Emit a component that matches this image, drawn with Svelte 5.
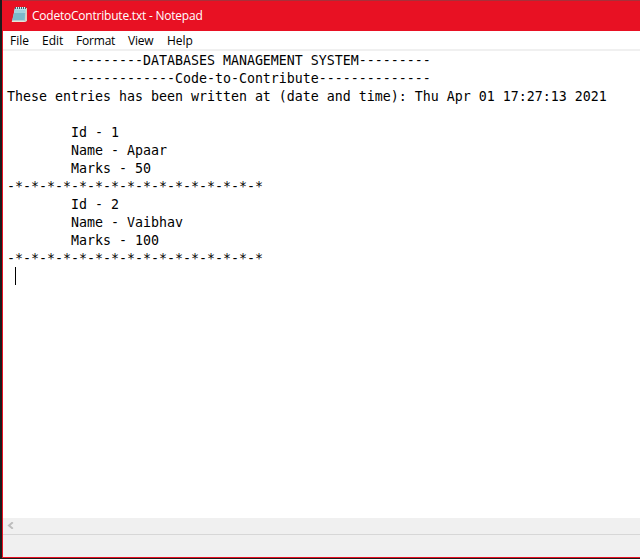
<script>
  const lines = [
    '\t---------DATABASES MANAGEMENT SYSTEM---------',
    '\t-------------Code-to-Contribute--------------',
    'These entries has been written at (date and time): Thu Apr 01 17:27:13 2021',
    '',
    '\tId - 1',
    '\tName - Apaar',
    '\tMarks - 50',
    '-*'.repeat(16),
    '\tId - 2',
    '\tName - Vaibhav',
    '\tMarks - 100',
    '-*'.repeat(16)
  ];
  const menus = ['File', 'Edit', 'Format', 'View', 'Help'];
</script>

<div class="desktop">
  <div class="window">
    <header>
      <svg width="17" height="17" viewBox="0 0 17 17">
        <path d="M4 2h12v13l-2 1H1z" fill="#c7d5d8" />
        <path d="M4 2h11l-1.3 13H1z" fill="#83bdce" />
        <path d="M4 2h11l-.5 5H3z" fill="#b4dfe9" />
        <path d="M1.5 14.5h12l-.2 1.5H.6z" fill="#e9e5d7" />
        <path d="M15 2h1v12l-2 2z" fill="#e0d0bd" />
        <path d="M4 5h10M3.6 7h10M3.2 9h10M2.8 11h10M2.4 13h10" stroke="#6ba8b8" stroke-width=".5" />
        <path d="M4.5 1v2M6.5 1v2M8.5 1v2M10.5 1v2M12.5 1v2M14.5 1v2" stroke="#48636b" />
        <path d="M5.5 1v1M7.5 1v1M9.5 1v1M11.5 1v1M13.5 1v1" stroke="#e8f2f2" />
      </svg>
      <span class="title">CodetoContribute.txt - Notepad</span>
    </header>
    <nav>
      {#each menus as m}<span class={m.toLowerCase()}>{m}</span>{/each}
    </nav>
    <main>
      {#each lines as line}<div class="line">{line}</div>{/each}
      <div class="caret"></div>
    </main>
    <div class="scroll">
      <svg width="7" height="7" viewBox="0 0 7 7"><path d="M5.8.3L2 3.5l3.8 3.2" fill="none" stroke="#bdbdbd" stroke-width="2" /></svg>
    </div>
    <footer></footer>
  </div>
</div>

<style>
  :global(body) { margin: 0; overflow: hidden; }
  .desktop {
    box-sizing: border-box;
    width: 640px;
    height: 559px;
    padding: 0 0 1px 2px;
    background: #1b1b1b;
    overflow: hidden;
  }
  .window {
    box-sizing: border-box;
    height: 558px;
    display: flex;
    flex-direction: column;
    border: solid #e81123;
    border-width: 0 0 1px 1px;
    background: #fff;
  }
  header {
    box-sizing: border-box;
    height: 31px;
    flex: none;
    display: flex;
    align-items: flex-start;
    padding: 5px 0 0 8px;
    gap: 4px;
    background: #e81123;
    border-top: 1px solid #a8303a;
  }
  .title {
    padding-top: 2px;
    font: 12px/16px 'Open Sans', sans-serif;
    color: #fff;
    white-space: nowrap;
    letter-spacing: -0.22px;
  }
  nav {
    box-sizing: border-box;
    height: 20px;
    flex: none;
    display: flex;
    padding-left: 7px;
    border-bottom: 2px solid #f0f0f0;
    font: 12px/20px 'Open Sans', sans-serif;
    color: #000;
  }
  .file { width: 32px; }
  .edit { width: 34px; }
  .format { width: 52px; letter-spacing: -0.2px; }
  .view { width: 39px; letter-spacing: -0.2px; }
  main {
    flex: 1;
    min-height: 0;
    padding: 1px 0 0 4px;
    font: 13.29px/18px 'DejaVu Sans Mono', monospace;
    color: #000;
  }
  .line {
    height: 18px;
    white-space: pre;
    tab-size: 8;
  }
  .caret {
    width: 1px;
    height: 18px;
    margin: -1px 0 0 8px;
    background: #000;
  }
  .scroll {
    height: 16px;
    flex: none;
    display: flex;
    align-items: center;
    padding-left: 4px;
    background: #f0f0f0;
  }
  .scroll svg { margin-top: -2px; }
  footer {
    height: 22px;
    flex: none;
    border-top: 1px solid #d7d7d7;
    background: #f0f0f0;
  }
</style>
